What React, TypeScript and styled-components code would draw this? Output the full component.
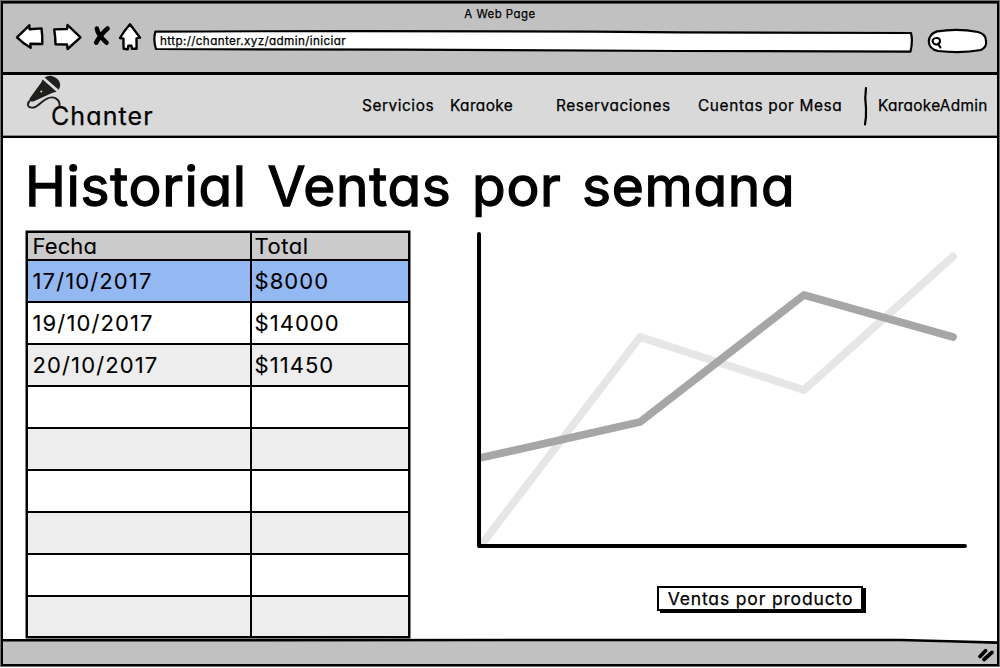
import React from "react";
import styled, { createGlobalStyle } from "styled-components";

const GlobalStyle = createGlobalStyle`
  * { box-sizing: border-box; }
  html, body { margin: 0; padding: 0; background: #fff; }
  body { overflow: hidden; }
`;

const Frame = styled.div`
  width: 1000px;
  height: 668px;
  padding: 1px 1px 2px 1px;
  background: #fff;
  color: #000;
  font-family: Inter, "Open Sans", sans-serif;
  font-feature-settings: "cv11", "calt" 0;
  -webkit-text-stroke: 0.25px #000;
`;

const Browser = styled.div`
  width: 998px;
  height: 665px;
  border: 2px solid #000;
  box-shadow: 0 0 0 1px rgba(0, 0, 0, 0.55);
  display: flex;
  flex-direction: column;
`;

const Chrome = styled.header`
  height: 69px;
  flex: none;
  background: #c1c1c1;
  border-top: 1px solid #555;
  display: flex;
  flex-direction: column;
`;

const Title = styled.div`
  height: 19px;
  line-height: 20px;
  text-align: center;
  font-size: 11.4px;
  letter-spacing: 0.5px;
`;

const Toolbar = styled.div`
  height: 40px;
  display: flex;
  align-items: flex-start;
  padding-left: 1px;
`;

const ToolIcons = styled.svg`
  display: block;
  width: 147px;
  height: 40px;
  flex: none;
`;

const Address = styled.div`
  position: relative;
  width: 763px;
  height: 22px;
  margin-top: 6px;
  padding: 1px 0 0 9px;
  line-height: 22px;
  font-size: 11.7px;
  letter-spacing: 0.37px;
`;

const Outline = styled.svg`
  position: absolute;
  inset: 0;
  overflow: visible;
`;

const AddressText = styled.span`
  position: relative;
`;

const SearchBox = styled.svg`
  display: block;
  width: 64px;
  height: 30px;
  margin: 3px 0 0 12px;
`;

const Nav = styled.nav`
  height: 66px;
  flex: none;
  padding-left: 1px;
  border-top: 3px solid #000;
  border-bottom: 2px solid #000;
  box-shadow: inset 0 -1px 0 #888;
  background: #d9d9d9;
  display: flex;
  align-items: center;
  font-size: 15.4px;
  line-height: 20px;
`;

const Brand = styled.div`
  position: relative;
  width: 358px;
  height: 61px;
  padding: 26px 0 0 47px;
  font-size: 25px;
  line-height: 30px;
  letter-spacing: 1.1px;
`;

const Mic = styled.svg`
  position: absolute;
  left: 18px;
  top: 0;
`;

const NavItem = styled.a<{ $slot: number; $track: number }>`
  width: ${(p) => p.$slot}px;
  letter-spacing: ${(p) => p.$track}px;
  white-space: nowrap;
`;

const Divider = styled.svg`
  width: 8px;
  height: 42px;
  margin-right: 8px;
  flex: none;
`;

const Main = styled.main`
  flex: 1;
  min-height: 0;
  padding: 0 0 0 23px;
`;

const Heading = styled.h1`
  margin: 0 0 0 -1px;
  height: 93px;
  padding-top: 15px;
  font-size: 55px;
  line-height: 66px;
  font-weight: 400;
  letter-spacing: 0.7px;
  word-spacing: 4.4px;
  white-space: nowrap;
  -webkit-text-stroke: 1.3px #000;
`;

const Content = styled.div`
  display: flex;
  align-items: flex-start;
`;

const Table = styled.div`
  width: 384px;
  height: 407px;
  border: 2px solid #000;
  box-shadow: 0 0 0 0.5px #000;
  font-size: 22px;
  -webkit-text-stroke: 0.1px #000;
`;

const Row = styled.div<{ $fill: string; $h: number }>`
  height: ${(p) => p.$h}px;
  display: grid;
  grid-template-columns: 224px 1fr;
  background: ${(p) => p.$fill};
  border-bottom: 2px solid #000;
  &:last-child { border-bottom: 0; }
`;

const Cell = styled.div<{ $track: number }>`
  padding-left: 2.5px;
  display: flex;
  align-items: center;
  letter-spacing: ${(p) => p.$track}px;
  &:first-child {
    padding-left: 4.5px;
    border-right: 2px solid #000;
  }
`;

const Side = styled.section`
  display: flex;
  flex-direction: column;
  margin-left: 60px;
`;

const Chart = styled.svg`
  display: block;
  width: 510px;
  height: 330px;
`;

const Button = styled.button`
  width: 206px;
  height: 25px;
  margin: 25px 0 0 187px;
  padding: 0 0 0 1px;
  border: 2px solid #000;
  background: #fff;
  box-shadow: 3px 2px 0 #000;
  color: #000;
  font: inherit;
  font-feature-settings: inherit;
  font-size: 17.5px;
  line-height: 20px;
  letter-spacing: 0.85px;
  white-space: nowrap;
`;

const Footer = styled.footer`
  height: 26px;
  flex: none;
`;

const FooterArt = styled.svg`
  display: block;
  overflow: visible;
`;

const rows: [string, string][] = [
  ["17/10/2017", "$8000"],
  ["19/10/2017", "$14000"],
  ["20/10/2017", "$11450"],
  ["", ""],
  ["", ""],
  ["", ""],
  ["", ""],
  ["", ""],
  ["", ""],
];

const fillOf = (i: number) => (i === 0 ? "#94b9f2" : i % 2 ? "#fff" : "#ededed");

export default function App() {
  return (
    <Frame>
      <GlobalStyle />
      <Browser>
        <Chrome>
          <Title>A Web Page</Title>
          <Toolbar>
            <ToolIcons viewBox="4 23 147 40">
              <g fill="#fff" stroke="#000" strokeWidth="2.4" strokeLinejoin="round">
                <path d="M17 37.4 L29.3 25.3 L29.6 29.3 L41.5 28.4 Q42.6 36 42.3 44 L30.4 43.8 L30.6 47.7 Q23 43.5 17 37.4Z" />
                <path d="M54.2 29.4 L67 29 L67.6 25 L80.5 37.3 L67.6 49 L67 44.5 L55.5 44.3 Q55.6 38 54.2 29.4Z" />
                <path d="M130 24.3 L140 37.6 L136.5 38.4 L136.6 48.8 L132 48.8 L131.4 45.7 L128.4 45.6 L127.8 49.2 L123.6 48.8 L123.4 38.6 L120 38 Q124 31 130 24.3Z" />
              </g>
              <path d="M96.8 28.6 Q98 35 106.5 42.6 M107.5 28.4 Q100 35 96.2 42.6" fill="none" stroke="#000" strokeWidth="4.6" strokeLinecap="round" />
            </ToolIcons>
            <Address>
              <Outline viewBox="151 29 763 22" width="763" height="22">
                <path d="M155.4 31.6 Q400 30.4 680 32.3 L911 33 Q913 41 910.5 51.6 L680 51 L400 49.7 L156 49 Q153 40 155.4 31.6Z" fill="#fff" stroke="#000" strokeWidth="2.2" strokeLinejoin="round" />
              </Outline>
              <AddressText>http://chanter.xyz/admin/iniciar</AddressText>
            </Address>
            <SearchBox viewBox="926 26 64 30">
              <path d="M937 31.4 Q958 28 978 32 Q986 34 986 41 Q987 47 981 50 Q962 53.5 938 51 Q929 49 928.8 41.5 Q929 34 937 31.4Z" fill="#fff" stroke="#000" strokeWidth="2.2" />
              <path d="M936 38 Q940.4 37.6 940 41.6 Q939 45 935.6 44.4 Q932 43.4 932.8 40 Q934 38 936 38Z M938 44 L940.4 47.4" fill="none" stroke="#000" strokeWidth="2.1" strokeLinecap="round" />
            </SearchBox>
          </Toolbar>
        </Chrome>
        <Nav>
          <Brand>
            <Mic viewBox="22 75 50 36" width="50" height="36">
              <path d="M44.6 77.6 Q47 75.4 51 75.7 Q58.8 77.4 60.2 84 Q60.4 87.4 58.6 89.8Z" fill="#1f1f1d" />
              <path d="M42.6 79.4 L56.6 91.8 L52.6 92.8 L33.4 101.6 Q29.8 101.8 29.6 98.4 L41.2 82.4Z" fill="#1f1f1d" />
              <circle cx="41.3" cy="91.4" r="1" fill="#ddd" />
              <path d="M31 99.5 Q26.4 103.4 28.6 106.4 Q33 110 40.4 103.2 Q49.4 95.2 55.4 98.2 Q60.4 101 59.4 106.4" fill="none" stroke="#1f1f1d" strokeWidth="1.9" />
            </Mic>
            Chanter
          </Brand>
          <NavItem $slot={88} $track={0.55}>Servicios</NavItem>
          <NavItem $slot={106} $track={0.38}>Karaoke</NavItem>
          <NavItem $slot={142} $track={0.55}>Reservaciones</NavItem>
          <NavItem $slot={164} $track={0.62}>Cuentas por Mesa</NavItem>
          <Divider viewBox="862 84 8 42">
            <path d="M866 87 Q864.5 97 866 107 Q866.4 116 865 123.5" fill="none" stroke="#000" strokeWidth="2.2" strokeLinecap="round" />
          </Divider>
          <NavItem $slot={112} $track={0.28}>KaraokeAdmin</NavItem>
        </Nav>
        <Main>
          <Heading>Historial Ventas por semana</Heading>
          <Content>
            <Table>
              <Row $fill="#cbcbcb" $h={28}>
                <Cell $track={0.1}>Fecha</Cell>
                <Cell $track={0.5}>Total</Cell>
              </Row>
              {rows.map(([date, total], i) => (
                <Row key={i} $fill={fillOf(i)} $h={i === 8 ? 39 : 42}>
                  <Cell $track={1.12}>{date}</Cell>
                  <Cell $track={1.05}>{total}</Cell>
                </Row>
              ))}
            </Table>
            <Side>
              <Chart viewBox="470 231 510 330">
                <g fill="none" strokeLinecap="round" strokeLinejoin="round">
                  <path d="M482 544 L640 337 L804 390 L953 256.5" stroke="#e6e6e6" strokeWidth="7.8" />
                  <path d="M482 457.5 L640 422 L804 295 L953 337" stroke="#a6a6a6" strokeWidth="7.8" />
                  <path d="M479 234 V546 H965" stroke="#000" strokeWidth="4" />
                </g>
              </Chart>
              <Button>Ventas por producto</Button>
            </Side>
          </Content>
        </Main>
        <Footer>
          <FooterArt viewBox="3 638 994 26" width="994" height="26">
            <path d="M3 640 L900 640 Q950 641 997 643 V664 H3Z" fill="#c1c1c1" />
            <path d="M3 640.3 L640 640 L900 640 Q950 641 997 642.6" fill="none" stroke="#000" strokeWidth="2.6" />
            <path d="M980 656.5 L985.6 650.8 M984 659.5 L992 652.4" stroke="#000" strokeWidth="3.7" strokeLinecap="round" />
          </FooterArt>
        </Footer>
      </Browser>
    </Frame>
  );
}
